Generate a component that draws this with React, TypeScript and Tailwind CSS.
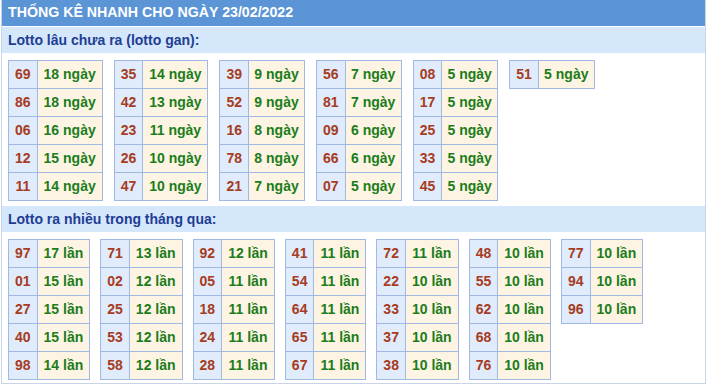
import React from 'react'

type Pair = [string, number]

const ganTables: Pair[][] = [
  [['69', 18], ['86', 18], ['06', 16], ['12', 15], ['11', 14]],
  [['35', 14], ['42', 13], ['23', 11], ['26', 10], ['47', 10]],
  [['39', 9], ['52', 9], ['16', 8], ['78', 8], ['21', 7]],
  [['56', 7], ['81', 7], ['09', 6], ['66', 6], ['07', 5]],
  [['08', 5], ['17', 5], ['25', 5], ['33', 5], ['45', 5]],
  [['51', 5]],
]

const hotTables: Pair[][] = [
  [['97', 17], ['01', 15], ['27', 15], ['40', 15], ['98', 14]],
  [['71', 13], ['02', 12], ['25', 12], ['53', 12], ['58', 12]],
  [['92', 12], ['05', 11], ['18', 11], ['24', 11], ['28', 11]],
  [['41', 11], ['54', 11], ['64', 11], ['65', 11], ['67', 11]],
  [['72', 11], ['22', 10], ['33', 10], ['37', 10], ['38', 10]],
  [['48', 10], ['55', 10], ['62', 10], ['68', 10], ['76', 10]],
  [['77', 10], ['94', 10], ['96', 10]],
]

function LottoTable({ rows, unit }: { rows: Pair[]; unit: string }) {
  // single-digit columns come out a little narrower in the original
  const narrow = rows.every(([, count]) => count < 10)

  return (
    <div className="grid grid-cols-[auto_auto] self-start border-l border-t border-[#9fb9e3]">
      {rows.map(([num, count]) => (
        <React.Fragment key={num}>
          <div className="h-[28px] px-[6px] flex items-center justify-center border-r border-b border-[#9fb9e3] bg-[#e0ebfc] text-[#a63c22]">
            {num}
          </div>
          <div
            className={`h-[28px] flex items-center justify-center border-r border-b border-[#9fb9e3] bg-[#fef4e3] text-[#1b7d1b] ${
              narrow ? 'w-[56px]' : 'px-[6px]'
            }`}
          >
            {count} {unit}
          </div>
        </React.Fragment>
      ))}
    </div>
  )
}

function SectionHeader({ children }: { children: React.ReactNode }) {
  return (
    <div className="h-[26px] px-[6px] flex items-center bg-[#d5e7fa] text-[#1f3d94] text-[14px]">
      {children}
    </div>
  )
}

export default function App() {
  return (
    <div className="w-[707px] h-[388px] bg-white font-['Liberation_Sans',Arial,sans-serif] font-bold text-[14px]">
      <div className="ml-px w-[705px] h-[384px] border border-t-0 border-[#c9d5e5]">
        {/* Title */}
        <div className="h-[26px] px-[6px] flex items-center bg-[#5b95d6] text-white text-[14.2px] mb-px">
          THỐNG KÊ NHANH CHO NGÀY 23/02/2022
        </div>

        <SectionHeader>Lotto lâu chưa ra (lotto gan):</SectionHeader>
        <div className="flex gap-[11px] px-[6px] pt-[7px] pb-[5px]">
          {ganTables.map((rows, i) => (
            <LottoTable key={i} rows={rows} unit="ngày" />
          ))}
        </div>

        <SectionHeader>Lotto ra nhiều trong tháng qua:</SectionHeader>
        <div className="flex gap-[10px] px-[6px] pt-[7px]">
          {hotTables.map((rows, i) => (
            <LottoTable key={i} rows={rows} unit="lần" />
          ))}
        </div>
      </div>
    </div>
  )
}
